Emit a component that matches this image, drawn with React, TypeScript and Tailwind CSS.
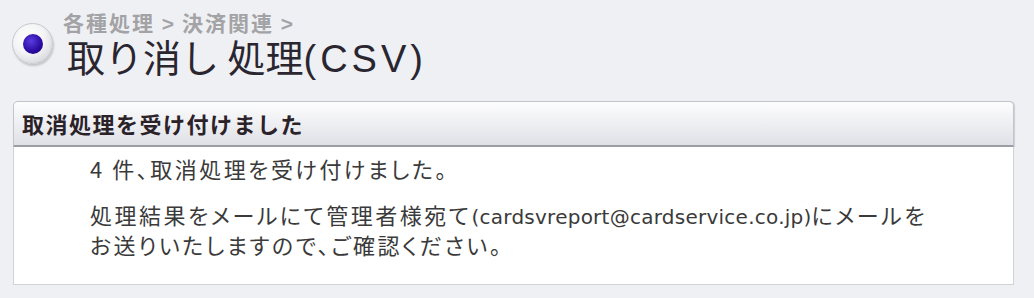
export default function App() {
  return (
    <div className="min-h-[298px] w-full bg-[#eff0f4] pt-[10px] pl-[12px] pr-[20px] font-['Noto_Sans_CJK_JP',sans-serif]">
      {/* Page title */}
      <div className="flex items-start gap-[14px]">
        <div className="mt-[13px] flex h-[41px] w-[41px] shrink-0 items-center justify-center rounded-full border border-[#c8c9cc] bg-[radial-gradient(circle_at_40%_35%,#ffffff_0%,#f4f4f6_45%,#c9cacf_100%)] shadow-[1px_2px_2px_rgba(0,0,0,0.18)]">
          <div className="h-[20px] w-[20px] rounded-full bg-[radial-gradient(circle_at_40%_35%,#5a3ce0_0%,#2a0aa0_60%,#1a0570_100%)]" />
        </div>
        <div className="flex flex-col">
          <div className="ml-[-4px] text-[21px] leading-[25px] font-bold tracking-[2px] text-[#a3a3a6]">
            各種処理<span className="font-['Liberation_Sans',sans-serif] tracking-[1px]"> &gt; </span>決済関連<span className="font-['Liberation_Sans',sans-serif] tracking-[1px]"> &gt;</span>
          </div>
          <h1 className="text-[38px] leading-[40px] text-[#2a2630]">
            取り消し 処理<span className="font-['Liberation_Sans',sans-serif] tracking-[4px]">(CSV)</span>
          </h1>
        </div>
      </div>

      {/* Result panel */}
      <div className="mt-[22px] ml-px w-[1001px]">
        <div className="flex h-[46px] items-center rounded-t-[5px] border border-b-2 border-[#c4c5ca] border-b-[#9c9ea6] bg-gradient-to-b from-[#fdfdfe] to-[#dfe1e7] px-[8px] shadow-[1px_0_1px_rgba(0,0,0,0.15)]">
          <span className="text-[22px] font-bold tracking-[1.5px] text-[#2a2228]">取消処理を受け付けました</span>
        </div>
        <div className="h-[138px] border border-t-0 border-[#d2d3d7] bg-white pl-[76px] pt-[8px] text-[22px] leading-[27px] tracking-[2.5px] text-[#3a3a3a] [font-feature-settings:'palt']">
          <p>4 件、取消処理を受け付けました。</p>
          <p className="mt-[19px]">
            処理結果をメールにて管理者様宛て
            <span className="font-['DejaVu_Sans',sans-serif] text-[20px] tracking-[0.25px]">(cardsvreport@cardservice.co.jp)</span>
            にメールを
            <br />
            お送りいたしますので、ご確認ください。
          </p>
        </div>
      </div>
    </div>
  );
}
